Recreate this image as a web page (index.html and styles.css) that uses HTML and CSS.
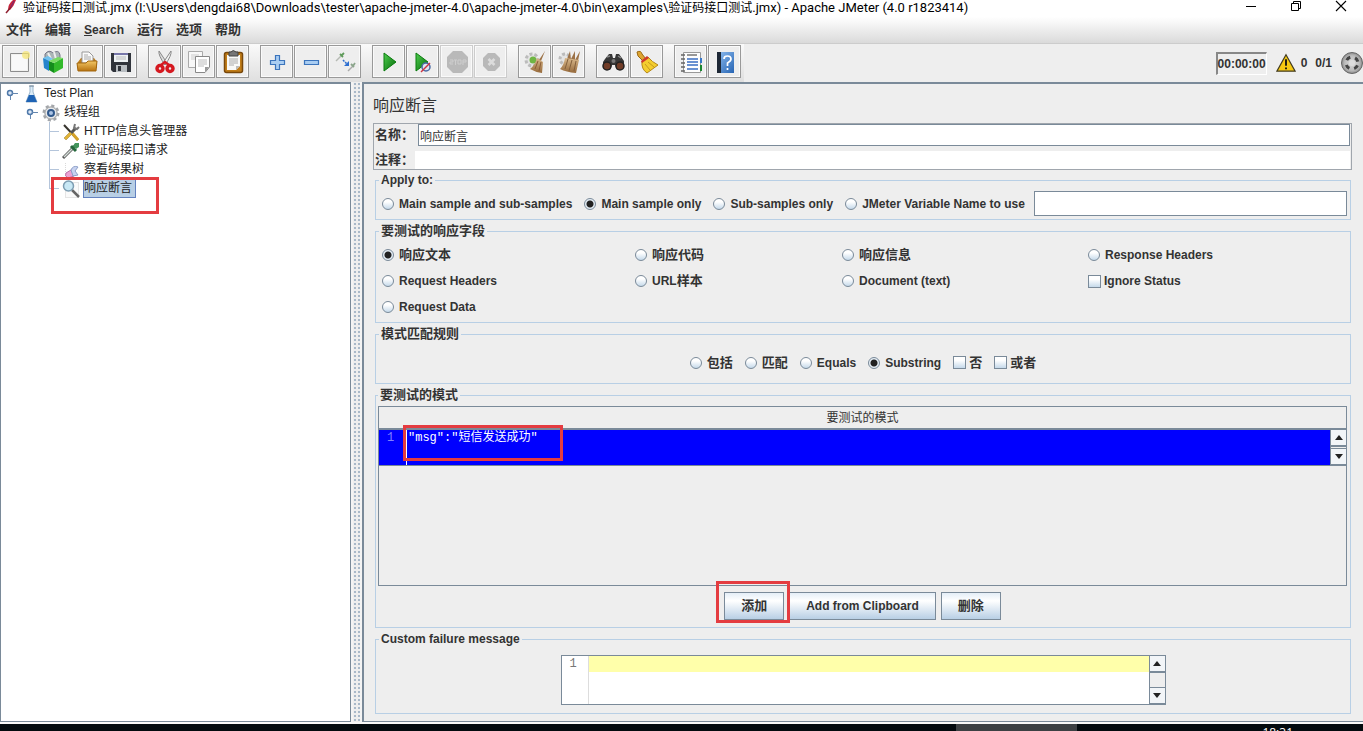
FILE: index.html
```html
<!DOCTYPE html>
<html lang="zh">
<head>
<meta charset="utf-8">
<title>Apache JMeter</title>
<link rel="stylesheet" href="styles.css">
</head>
<body>
<svg class="defs" aria-hidden="true">
  <defs>
    <linearGradient id="green" x1="0" y1="0" x2="1" y2="1"><stop offset="0" stop-color="#4fce4f"/><stop offset="1" stop-color="#046a08"/></linearGradient>
    <linearGradient id="straw" x1="0" y1="0" x2="0" y2="1"><stop offset="0" stop-color="#d9b98c"/><stop offset="1" stop-color="#96693a"/></linearGradient>
    <linearGradient id="gold" x1="0" y1="0" x2="0" y2="1"><stop offset="0" stop-color="#f3c765"/><stop offset="1" stop-color="#b8720f"/></linearGradient>
    <linearGradient id="blue" x1="0" y1="0" x2="1" y2="1"><stop offset="0" stop-color="#8fbdf0"/><stop offset="1" stop-color="#2765b4"/></linearGradient>
    <radialGradient id="ball"><stop offset="0" stop-color="#ddd"/><stop offset="0.7" stop-color="#bbb"/><stop offset="1" stop-color="#8c8c8c"/></radialGradient>
  </defs>
</svg>
<div class="window">
  <header class="titlebar">
    <svg class="feather" width="12" height="16" viewBox="0 0 12 16"><path d="M4 10Q4 4 9 0H12Q10 6 6 10z" fill="#c8243c"/><path d="M7 7L10 1" stroke="#6b2a7a"/><path d="M2 13L7 7" stroke="#8e1f2f" stroke-width="1.5"/></svg>
    <h1 class="title"><span class="han">验证码接口测试</span>.jmx (I:\Users\dengdai68\Downloads\tester\apache-jmeter-4.0\apache-jmeter-4.0\bin\examples\<span class="han">验证码接口测试</span>.jmx) - Apache JMeter (4.0 r1823414)</h1>
    <div class="winbuttons">
      <button class="plain" aria-label="Minimize"><svg width="12" height="12"><path d="M1 6.5H11" stroke="#000"/></svg></button>
      <button class="plain" aria-label="Restore"><svg width="12" height="12"><path d="M1.500 3.500H8.500V10.500H1.500zM3.500 3.500V1.500H10.500V8.500H8.500" fill="none" stroke="#000"/></svg></button>
      <button class="plain" aria-label="Close"><svg width="12" height="12"><path d="M1 1L11 11M11 1L1 11" stroke="#000" stroke-width="1.100"/></svg></button>
    </div>
  </header>
  <nav class="menubar">
    <button class="plain zh">文件</button><button class="plain zh">编辑</button><button class="plain"><u>S</u>earch</button><button class="plain zh">运行</button><button class="plain zh">选项</button><button class="plain zh">帮助</button>
  </nav>
  <div class="toolbar">
    <div class="tools">
      <div class="group">
        <button class="tool" aria-label="New"><svg width="24" height="24" viewBox="0 0 24 24"><path d="M3.500 3.500H21.500V21.500H3.500z" fill="#f1f1ef" stroke="#8d8d8d"/><path d="M5 5H15L20 10V20H5z" fill="#fff" opacity=".6"/><circle cx="19" cy="5" r="4" fill="#f7e66d" opacity=".7"/></svg></button>
        <button class="tool" aria-label="Templates"><svg width="24" height="24" viewBox="0 0 24 24"><path d="M4 4Q8 -1 12 3Q18 -1 19 5V10H4z" fill="#aab4b6" stroke="#778"/><path d="M7 3L11 11M13 2L15 9" stroke="#eee" stroke-width="2"/><path d="M2 8L8 10V21L3 18z" fill="#2584cc"/><path d="M2 8L7 6L12 9L8 11z" fill="#72c2ee"/><path d="M8 11L13 13V23L8 20z" fill="#148d1c"/><path d="M13 13L22 8V18L13 23z" fill="#32b92a"/><path d="M8 11L17 7L22 8L13 13z" fill="#78dc62"/></svg></button>
        <button class="tool" aria-label="Open"><svg width="24" height="24" viewBox="0 0 24 24"><path d="M3 12L6 8H19L22 12V18H3z" fill="#bd7d1c"/><path d="M7 2H14L18 6V13H7z" fill="#fafafa" stroke="#999"/><path d="M9 5H13M9 7H16M9 9H16" stroke="#aaa"/><path d="M2 13H11L13 11H22L21 21H3z" fill="url(#gold)" stroke="#a1660e"/></svg></button>
        <button class="tool" aria-label="Save"><svg width="24" height="24" viewBox="0 0 24 24"><path d="M2 3H22V22H4L2 20z" fill="#30343b"/><path d="M5 3H19V12H5z" fill="#edf2f4"/><path d="M5 3H19V5H5z" fill="#77a"/><path d="M7 7H17M7 9H17" stroke="#bbb"/><path d="M7 15H18V22H7z" fill="#b9bec2"/><path d="M9 16H12V21H9z" fill="#30343b"/></svg></button>
      </div>
      <div class="group">
        <button class="tool" aria-label="Cut"><svg width="24" height="24" viewBox="0 0 24 24"><path d="M6 1Q5 5 12 15L14 13z" fill="#ddd" stroke="#888"/><path d="M18 1Q19 5 12 15L10 13z" fill="#f3f3f3" stroke="#888"/><ellipse cx="7" cy="18.500" rx="3" ry="3" fill="none" stroke="#d51920" stroke-width="3.500"/><ellipse cx="17" cy="18.500" rx="3" ry="3" fill="none" stroke="#d51920" stroke-width="3.500"/><path d="M8 15L12 12L16 15" fill="none" stroke="#d51920" stroke-width="2.500"/></svg></button>
        <button class="tool" aria-label="Copy"><svg width="24" height="24" viewBox="0 0 24 24"><path d="M1.500 1.500H15.500V17.500H1.500z" fill="#f8f8f8" stroke="#aaa"/><path d="M4 5H12M4 7H12M4 9H12" stroke="#ccc"/><path d="M8.500 6.500H22.500V17L18 22.500H8.500z" fill="#fff" stroke="#888"/><path d="M11 10H20M11 12H20M11 14H20M11 16H17" stroke="#bbb"/><path d="M22 17H18V22z" fill="#999"/></svg></button>
        <button class="tool" aria-label="Paste"><svg width="24" height="24" viewBox="0 0 24 24"><rect x="3.500" y="2.500" width="18" height="20" rx="2" fill="#c17d18" stroke="#79480b" stroke-width="1.500"/><path d="M6 5H19V16L15 20H6z" fill="#f9f9f7"/><path d="M19 16H15V20z" fill="#bbb"/><path d="M8 9H17M8 11H17M8 13H17M8 15H13" stroke="#aaa"/><path d="M8 2H10Q12 -1 15 2H17V6H8z" fill="#777" stroke="#444"/></svg></button>
      </div>
      <div class="group">
        <button class="tool" aria-label="Expand all"><svg width="24" height="24" viewBox="0 0 24 24"><path d="M10.500 5.500H14.500V10.500H19.500V14.500H14.500V19.500H10.500V14.500H5.500V10.500H10.500z" fill="#a9cdf2" stroke="#3b74bc" stroke-width="1.200"/></svg></button>
        <button class="tool" aria-label="Collapse all"><svg width="24" height="24" viewBox="0 0 24 24"><path d="M5.500 10.500H19.500V14.500H5.500z" fill="#a9cdf2" stroke="#3b74bc" stroke-width="1.200"/></svg></button>
        <button class="tool" aria-label="Toggle"><svg width="24" height="24" viewBox="0 0 24 24"><path d="M3 11L8 6" stroke="#b6bab4" stroke-width="1.500"/><path d="M7 4L10 7M8 6L11 3" stroke="#5f9b5a" stroke-width="1.800"/><path d="M15 21L20 16" stroke="#aaa" stroke-width="1.500"/><path d="M18 14L21 17M20 16L22 13" stroke="#8ba58b" stroke-width="1.800"/><path d="M10 10L14 14" stroke="#2d6ed0" stroke-width="1.500" stroke-dasharray="2 1"/><path d="M16 11V16H11z" fill="#2d6ed0"/></svg></button>
      </div>
      <div class="group">
        <button class="tool" aria-label="Start"><svg width="24" height="24" viewBox="0 0 24 24"><path d="M7 3L19 12L7 21z" fill="url(#green)" stroke="#087b0c"/></svg></button>
        <button class="tool" aria-label="Start no pauses"><svg width="24" height="24" viewBox="0 0 24 24"><path d="M5 3L17 12L5 21z" fill="url(#green)" stroke="#087b0c"/><circle cx="15" cy="17" r="4" fill="#dce5f2" stroke="#4a69a4" stroke-width="1.500"/><path d="M10 22L19 13" stroke="#cf3340" stroke-width="1.500"/></svg></button>
        <button class="tool off" disabled aria-label="Stop"><svg width="24" height="24" viewBox="0 0 24 24"><path d="M8 1H17L23 7V17L17 23H8L2 17V7z" fill="#b9b9b9"/><path d="M5 10H8V12H5V14H8M9 10H12M10.500 10V15M13 10H16V14H13zM18 15V10H21V12H18" fill="none" stroke="#cecece"/></svg></button>
        <button class="tool off" disabled aria-label="Shutdown"><svg width="24" height="24" viewBox="0 0 24 24"><path d="M9 3H16L21 8V16L16 21H9L4 16V8z" fill="#b9b9b9"/><path d="M9.500 9L15.500 15M15.500 9L9.500 15" stroke="#dcdcdc" stroke-width="2.500"/></svg></button>
      </div>
      <div class="group">
        <button class="tool" aria-label="Clear"><svg width="24" height="24" viewBox="0 0 24 24"><circle cx="9" cy="10" r="6" fill="#e4e4e4" stroke="#bbb" stroke-width="3" stroke-dasharray="3 2"/><circle cx="10" cy="10" r="3.500" fill="#6fb543"/><path d="M22 1L16 10L18 11z" fill="#9c7247"/><path d="M14 8L20 12L19 23Q12 22 7 19Q12 15 14 8z" fill="url(#straw)"/><path d="M15 11L12 19M18 12L16 21" stroke="#8b5c35"/></svg></button>
        <button class="tool" aria-label="Clear all"><svg width="24" height="24" viewBox="0 0 24 24"><circle cx="8" cy="9" r="5" fill="#e4e4e4" stroke="#bbb" stroke-width="3" stroke-dasharray="3 2"/><path d="M13 1L10 9L14 10zM18 1L14 9L18 11zM23 1L18 10L21 11z" fill="#9c7247"/><path d="M8 8L22 10L19 23Q9 22 3 19Q7 15 8 8z" fill="url(#straw)"/><path d="M11 9L8 19M15 10L12 21M19 11L17 21" stroke="#83603c"/></svg></button>
      </div>
      <div class="group">
        <button class="tool" aria-label="Search"><svg width="24" height="24" viewBox="0 0 24 24"><path d="M4 9L8 4H11L12 8H14L15 4H18L23 11V18L16 20L14 15H11L9 20L2 18V12z" fill="#363636"/><path d="M6 7L9 6M17 6L20 8" stroke="#888" stroke-width="1.500"/><circle cx="6" cy="16" r="4" fill="#713d28" stroke="#222" stroke-width="1.500"/><circle cx="19" cy="16" r="4" fill="#713d28" stroke="#222" stroke-width="1.500"/><circle cx="12.500" cy="11" r="2" fill="#777"/></svg></button>
        <button class="tool" aria-label="Reset search"><svg width="24" height="24" viewBox="0 0 24 24"><path d="M2 2Q6 0 7 4L11 9L8 11L3 6z" fill="#dda531" stroke="#9b6811"/><path d="M7 11L13 7Q17 12 23 15L12 23Q6 19 7 11z" fill="#f4cd2e" stroke="#b58818"/><path d="M6 11L12 6L14 8L7 13z" fill="#cf382b"/><path d="M10 14L15 20M13 12L19 17" stroke="#c39a20"/></svg></button>
      </div>
      <div class="group">
        <button class="tool" aria-label="Function helper"><svg width="24" height="24" viewBox="0 0 24 24"><path d="M4.500 2.500H21.500V22.500H4.500z" fill="#fdfdfd" stroke="#999"/><path d="M2 5H6M2 9H6M2 13H6M2 17H6M2 21H6" stroke="#666" stroke-width="1.500"/><path d="M8 5H18" stroke="#333"/><path d="M8 9H19M8 12H19M8 15H19M8 19H19" stroke="#3a6dc2" stroke-width="1.500"/><path d="M21 8H23V13H21z" fill="#3979c9"/><path d="M21 15H23V21H21z" fill="#1b8731"/></svg></button>
        <button class="tool" aria-label="Help"><svg width="24" height="24" viewBox="0 0 24 24"><path d="M4 2H21V23H4z" fill="url(#blue)"/><path d="M4 2H8V23H4z" fill="#1d2735"/><path d="M11 9Q11 6 14.500 6T18 9Q18 11 14.500 13V16M14.500 18V20" fill="none" stroke="#fff" stroke-width="1.700"/></svg></button>
      </div>
    </div>
    <div class="status">
      <output class="timer">00:00:00</output>
      <svg width="20" height="20" viewBox="0 0 22 20"><path d="M11 1L21 19H1z" fill="#f6c911" stroke="#423b20" stroke-width="1.300"/><path d="M11 6V13M11 15V17" stroke="#111" stroke-width="2"/></svg>
      <span class="errors">0</span>
      <span class="threads">0/1</span>
      <svg width="22" height="22" viewBox="0 0 22 22"><circle cx="11" cy="11" r="10.500" fill="url(#ball)" stroke="#666"/><circle cx="11" cy="11" r="6" fill="none" stroke="#444" stroke-width="3" stroke-dasharray="4.400 5.025" stroke-dashoffset="-2.500"/><circle cx="11" cy="11" r="3" fill="#ddd"/></svg>
    </div>
  </div>
  <div class="body">
    <aside class="tree">
      <ul class="nodes">
        <li><div class="node"><svg class="knob" width="12" height="12" viewBox="0 0 12 12"><circle cx="4" cy="5" r="2.500" fill="#dce7f5" stroke="#4f79aa" stroke-width="1.500"/><path d="M6 5.500H12M4.500 8V12" stroke="#6688b0"/></svg><svg width="18" height="18" viewBox="0 0 18 18"><path d="M8 1H11V7L15 17H4L8 7z" fill="#dcecf7" stroke="#9bb6cc"/><path d="M7 10H12L15 17H4z" fill="#1e63b5"/><path d="M7 1H12" stroke="#789"/></svg><span class="name">Test Plan</span></div>
        <ul>
          <li><div class="node"><svg class="knob" width="12" height="12" viewBox="0 0 12 12"><circle cx="4" cy="5" r="2.500" fill="#dce7f5" stroke="#4f79aa" stroke-width="1.500"/><path d="M6 5.500H12M4.500 8V12" stroke="#6688b0"/></svg><svg width="18" height="18" viewBox="0 0 18 18"><circle cx="9" cy="9" r="7" fill="#d5d7da" stroke="#a3a6aa" stroke-width="3" stroke-dasharray="3 2.500"/><circle cx="9" cy="9" r="6" fill="#e6e8ea" stroke="#aaa"/><circle cx="9" cy="9" r="3" fill="#adc5e5" stroke="#31598c" stroke-width="2"/></svg><span class="name">线程组</span></div>
          <ul class="leaves">
            <li><div class="node"><svg width="18" height="18" viewBox="0 0 18 18"><path d="M2 2L16 17" stroke="#37342e" stroke-width="2"/><path d="M10 10L16 17" stroke="#d5a329" stroke-width="3"/><path d="M3 16L14 5" stroke="#555" stroke-width="3"/><path d="M3 16L9 10" stroke="#e2b437" stroke-width="3"/><path d="M13 1L12 5L15 6L17 4" fill="none" stroke="#777" stroke-width="2"/></svg><span class="name">HTTP信息头管理器</span></div></li>
            <li><div class="node"><svg width="18" height="18" viewBox="0 0 18 18"><path d="M1 16L11 6" stroke="#555" stroke-width="3"/><path d="M2 15L11 6" stroke="#d6dfda" stroke-width="1.500"/><path d="M9 4L14 9M11 6L15 2" stroke="#27683d" stroke-width="3"/><path d="M13 1L17 1L17 5L14 7L11 4z" fill="#44945b"/></svg><span class="name">验证码接口请求</span></div></li>
            <li><div class="node"><svg width="18" height="18" viewBox="0 0 18 18"><path d="M3.500 2V17M3 16.500H17" stroke="#dadada" stroke-dasharray="1 1"/><path d="M4 12L9 9L12 15L6 17Q2 15 4 12z" fill="#eda2d3" stroke="#bb72a8"/><path d="M9 9Q11 4 16 6L13 10L16 14L11 15z" fill="#c8d3f1" stroke="#8d9fc8"/></svg><span class="name">察看结果树</span></div></li>
            <li><div class="node"><svg width="18" height="18" viewBox="0 0 18 18"><path d="M3.500 2.500H16.500V17.500H3.500z" fill="#fafafa" stroke="#ccc" stroke-dasharray="1 1"/><path d="M10 10L17 17" stroke="#666" stroke-width="2.500"/><circle cx="6.500" cy="6" r="5" fill="#c8e8f5" stroke="#7d9db2" stroke-width="1.500"/></svg><span class="name selected">响应断言</span><i class="mark mark-node"></i></div></li>
          </ul></li>
        </ul></li>
      </ul>
    </aside>
    <div class="splitter"></div>
    <main class="pane">
      <h2 class="heading">响应断言</h2>
      <div class="naming">
        <div class="field"><label class="zh" for="name">名称：</label><input class="text" id="name" type="text" value="响应断言"></div>
        <div class="field"><label class="zh" for="comment">注释：</label><input class="text bare" id="comment" type="text"></div>
      </div>
      <div class="sections">
        <fieldset><legend>Apply to:</legend>
          <div class="row">
            <label><input type="radio" name="scope">Main sample and sub-samples</label>
            <label><input type="radio" name="scope" checked>Main sample only</label>
            <label><input type="radio" name="scope">Sub-samples only</label>
            <label><input type="radio" name="scope">JMeter Variable Name to use</label>
            <input class="text variable" type="text" aria-label="JMeter Variable Name">
          </div>
        </fieldset>
        <fieldset><legend class="zh">要测试的响应字段</legend>
          <div class="fields">
            <label class="zh"><input type="radio" name="part" checked>响应文本</label>
            <label class="zh"><input type="radio" name="part">响应代码</label>
            <label class="zh"><input type="radio" name="part">响应信息</label>
            <label><input type="radio" name="part">Response Headers</label>
            <label><input type="radio" name="part">Request Headers</label>
            <label><input type="radio" name="part"><span>URL<span class="zh">样本</span></span></label>
            <label><input type="radio" name="part">Document (text)</label>
            <label class="tick"><input type="checkbox">Ignore Status</label>
            <label><input type="radio" name="part">Request Data</label>
          </div>
        </fieldset>
        <fieldset><legend class="zh">模式匹配规则</legend>
          <div class="row rules">
            <label class="zh"><input type="radio" name="rule">包括</label>
            <label class="zh"><input type="radio" name="rule">匹配</label>
            <label><input type="radio" name="rule">Equals</label>
            <label><input type="radio" name="rule" checked>Substring</label>
            <label class="zh tick"><input type="checkbox">否</label>
            <label class="zh tick"><input type="checkbox">或者</label>
          </div>
        </fieldset>
        <fieldset class="grow"><legend class="zh">要测试的模式</legend>
          <div class="patterns">
            <div class="tablebox">
              <table>
                <thead><tr><th>要测试的模式</th></tr></thead>
                <tbody><tr><td>
                  <div class="editor active">
                    <span class="lineno">1</span>
                    <textarea aria-label="Pattern" rows="1">"msg":"短信发送成功"</textarea>
                    <div class="scroll"><button aria-label="Up"></button><button class="down" aria-label="Down"></button></div>
                    <i class="mark mark-pattern"></i>
                  </div>
                </td></tr></tbody>
              </table>
            </div>
            <div class="actions">
              <div class="anchor"><button class="push zh">添加</button><i class="mark mark-add"></i></div>
              <button class="push">Add from Clipboard</button>
              <button class="push zh">删除</button>
            </div>
          </div>
        </fieldset>
        <fieldset><legend>Custom failure message</legend>
          <div class="message">
            <div class="editor framed">
              <span class="lineno">1</span>
              <textarea aria-label="Custom failure message" rows="1"></textarea>
              <div class="scroll"><button aria-label="Up"></button><button class="down" aria-label="Down"></button></div>
            </div>
          </div>
        </fieldset>
      </div>
    </main>
  </div>
  <footer class="taskbar"><span class="task"></span><time class="clock">18:31</time></footer>
</div>
</body>
</html>
```
FILE: styles.css
```css
* { box-sizing: border-box; }
body { margin: 0; font: bold 12px/16px "Liberation Sans", "Noto Sans CJK SC", sans-serif; color: #333; background: #eee; }
button, input, textarea { font: inherit; color: inherit; margin: 0; padding: 0; border-radius: 0; }
svg { display: block; flex: none; }
.defs { position: absolute; width: 0; height: 0; }
.zh { font-size: 13px; }
.plain { border: 0; background: none; }
.window { display: flex; flex-direction: column; height: 100vh; overflow: hidden; }

.titlebar { display: flex; align-items: flex-start; height: 17px; padding: 0 16px 0 4px; background: #fff; }
.title { flex: 1; margin: 0 0 0 7px; font: 13px/16px Roboto, "Noto Sans CJK SC", sans-serif; color: #000; white-space: nowrap; }
.han { font-size: 12px; }
.winbuttons { display: flex; gap: 33px; }
.menubar { display: flex; align-items: center; gap: 13px; height: 27px; padding: 0 6px; background: linear-gradient(#fff, #dadada); border-bottom: 1px solid #ccc; }
.toolbar { display: flex; justify-content: space-between; height: 38px; background: #eee; }
.tools { display: flex; gap: 11px; padding: 1px 3px 4px 2px; background: linear-gradient(#fafafa, #dfdfdf); }
.group { display: flex; gap: 1px; }
.tool { display: grid; place-items: center; width: 33px; height: 33px; border: 1px solid #999; background: #eee; outline: 1px solid #fafafa; outline-offset: -2px; }
.tool.off { border-color: #ccc; }
.status { display: flex; align-items: center; }
.timer { padding: 2px 0; border: 1px solid #fff; border-top: 2px solid #888; border-left: 2px solid #888; margin-right: 9px; }
.errors { margin: 0 8px 0 5px; }
.threads { margin-right: 9px; }

.body { flex: 1; min-height: 0; display: flex; padding-bottom: 2px; background: #f8f8f8; }
.tree { width: 351px; border: 1px solid #7a8a99; border-top-width: 2px; background: #fff; }
.splitter { width: 11px; border: solid #f4f4f4; border-width: 0 2px; background: radial-gradient(circle, #a9b9c9 1px, transparent 1px) 0 0 / 4px 4px #eee; }
.tree ul { list-style: none; margin: 0; padding: 0; font-weight: normal; }
.tree .nodes { padding: 0 0 0 5px; }
.tree ul ul { padding-left: 20px; }
.node { position: relative; display: flex; align-items: center; height: 19px; }
.knob { margin-right: 4px; }
.name { margin-left: 4px; line-height: 17px; white-space: nowrap; color: #222; }
.tree ul.leaves { margin-left: 23px; padding-left: 0; }
.leaves .node { padding-left: 13px; }
.leaves .node::before { content: ""; position: absolute; left: 0; top: 9px; width: 10px; border-top: 1px solid #b4c5db; }
.leaves .node::after { content: ""; position: absolute; left: 0; top: 0; height: 100%; border-left: 1px solid #b4c5db; }
.leaves li:last-child .node::after { height: 50%; }
.selected { padding-right: 3px; background: #b8cfe5; outline: 1px solid #6382bf; }
.mark { position: absolute; z-index: 1; border: 3px solid #e43c40; pointer-events: none; }
.mark-node { left: 2px; top: -2px; width: 108px; height: 37px; }

.pane { flex: 1; min-width: 0; display: flex; flex-direction: column; padding: 10px 11px 7px 9px; border: solid #7a8a99; border-width: 2px 0 1px 2px; background: #eee; }
.heading { margin: 0; font: 16px/24px "Liberation Sans", "Noto Sans CJK SC", sans-serif; }
.naming { display: flex; flex-direction: column; gap: 5px; margin-top: 5px; border: 1px solid #a0a6ad; }
.field { display: flex; align-items: center; gap: 2px; padding: 0 1px; }
.field label { width: 41px; white-space: nowrap; }
.text { flex: 1; min-width: 0; height: 22px; padding: 0 1px; border: 1px solid #7a8a99; background: #fff; font-size: 12px; font-weight: normal; outline: none; }
.bare { height: 18px; border: 0; margin-left: -3px; }
.sections { flex: 1; display: flex; flex-direction: column; gap: 3px; padding: 2px 1px 0 2px; }
fieldset { margin: 0; min-width: 0; padding: 0 3px; border: 1px solid #b8cfe5; }
legend { height: 16px; margin-left: 0; padding: 0 2px; line-height: 16px; }
label { display: flex; align-items: center; gap: 5px; white-space: nowrap; }
.row { display: flex; align-items: center; gap: 12px; padding: 3px 0 3px 3px; }
.variable { height: 25px; margin-left: -3px; }
.fields { display: grid; grid-template-columns: 253fr 207fr 246fr 259fr; grid-auto-rows: 26px; padding: 3px 0 2px 3px; }
.rules { justify-content: center; height: 41px; padding: 3px 0; }
.tick { gap: 3px; }
input[type=radio], input[type=checkbox] { appearance: none; flex: none; width: 12px; height: 12px; border: 1px solid #7a8a99; background: linear-gradient(#fff 30%, #c5d9ea); }
input[type=radio] { border-radius: 50%; }
input[type=checkbox] { width: 13px; height: 13px; }
input[type=radio]:checked { background: radial-gradient(circle, #222 3px, transparent 4px), #e5eef6; }

.grow { flex: 1; display: flex; flex-direction: column; padding: 0 3px 0 2px; }
.patterns { flex: 1; display: flex; flex-direction: column; padding-top: 3px; }
.tablebox { flex: 1; border: 1px solid #7a8a99; }
table { width: 100%; border-collapse: collapse; }
th { height: 22px; padding: 0; font-weight: normal; border-bottom: 2px solid #7a8a99; }
td { padding: 0; border-bottom: 1px solid #7a8a99; }
.editor { position: relative; display: flex; height: 35px; font: 12px/16px "Liberation Mono", "Noto Sans CJK SC", monospace; background: #fff; }
.lineno { width: 27px; padding-left: 8px; color: #777; border-right: 1px solid #ddd; }
.editor textarea { flex: 1; border: 0; resize: none; outline: none; overflow: hidden; background: linear-gradient(#ffffaa, #ffffaa) 0 0 / 100% 16px no-repeat; }
.active { background: #00f; }
.active .lineno { border-color: #00f; color: #8080ff; }
.active textarea { padding-left: 1px; background: none; color: #fff; border-left: 1px solid #fff; }
.framed { width: 605px; max-width: 100%; height: 50px; border: 1px solid #7a8a99; }
.scroll { display: flex; flex-direction: column; justify-content: space-between; width: 16px; border-left: 1px solid #7a8a99; background: #eee; }
.scroll button { display: grid; place-items: center; height: 17px; border: 0; border-bottom: 2px solid #7a8a99; background: #f2f5f8; }
.scroll button::before { content: ""; border: solid transparent; border-width: 0 4px 5px; border-bottom-color: #222; }
.scroll .down { border-bottom-width: 1px; border-top: 1px solid #7a8a99; }
.scroll .down::before { border-width: 5px 4px 0; border-top-color: #222; }
.mark-pattern { left: 24px; top: -5px; width: 160px; height: 36px; }
.actions { display: flex; justify-content: center; gap: 5px; padding: 6px 0 7px; }
.anchor { position: relative; }
.push { height: 28px; padding: 0 16px; border: 1px solid #7a8a99; background: linear-gradient(#e4eef7, #fff 30%, #b8cfe5); }
.mark-add { left: -8px; top: -11px; width: 74px; height: 42px; }
.message { display: flex; justify-content: center; padding: 8px 0; }

.taskbar { display: flex; align-items: flex-start; justify-content: flex-end; height: 7px; overflow: hidden; background: #030a0e; color: #fff; font: 12px/12px "Open Sans", sans-serif; }
.task { width: 121px; height: 7px; background: #3c4043; }
.clock { margin: 3px 70px 0 185px; }
```
